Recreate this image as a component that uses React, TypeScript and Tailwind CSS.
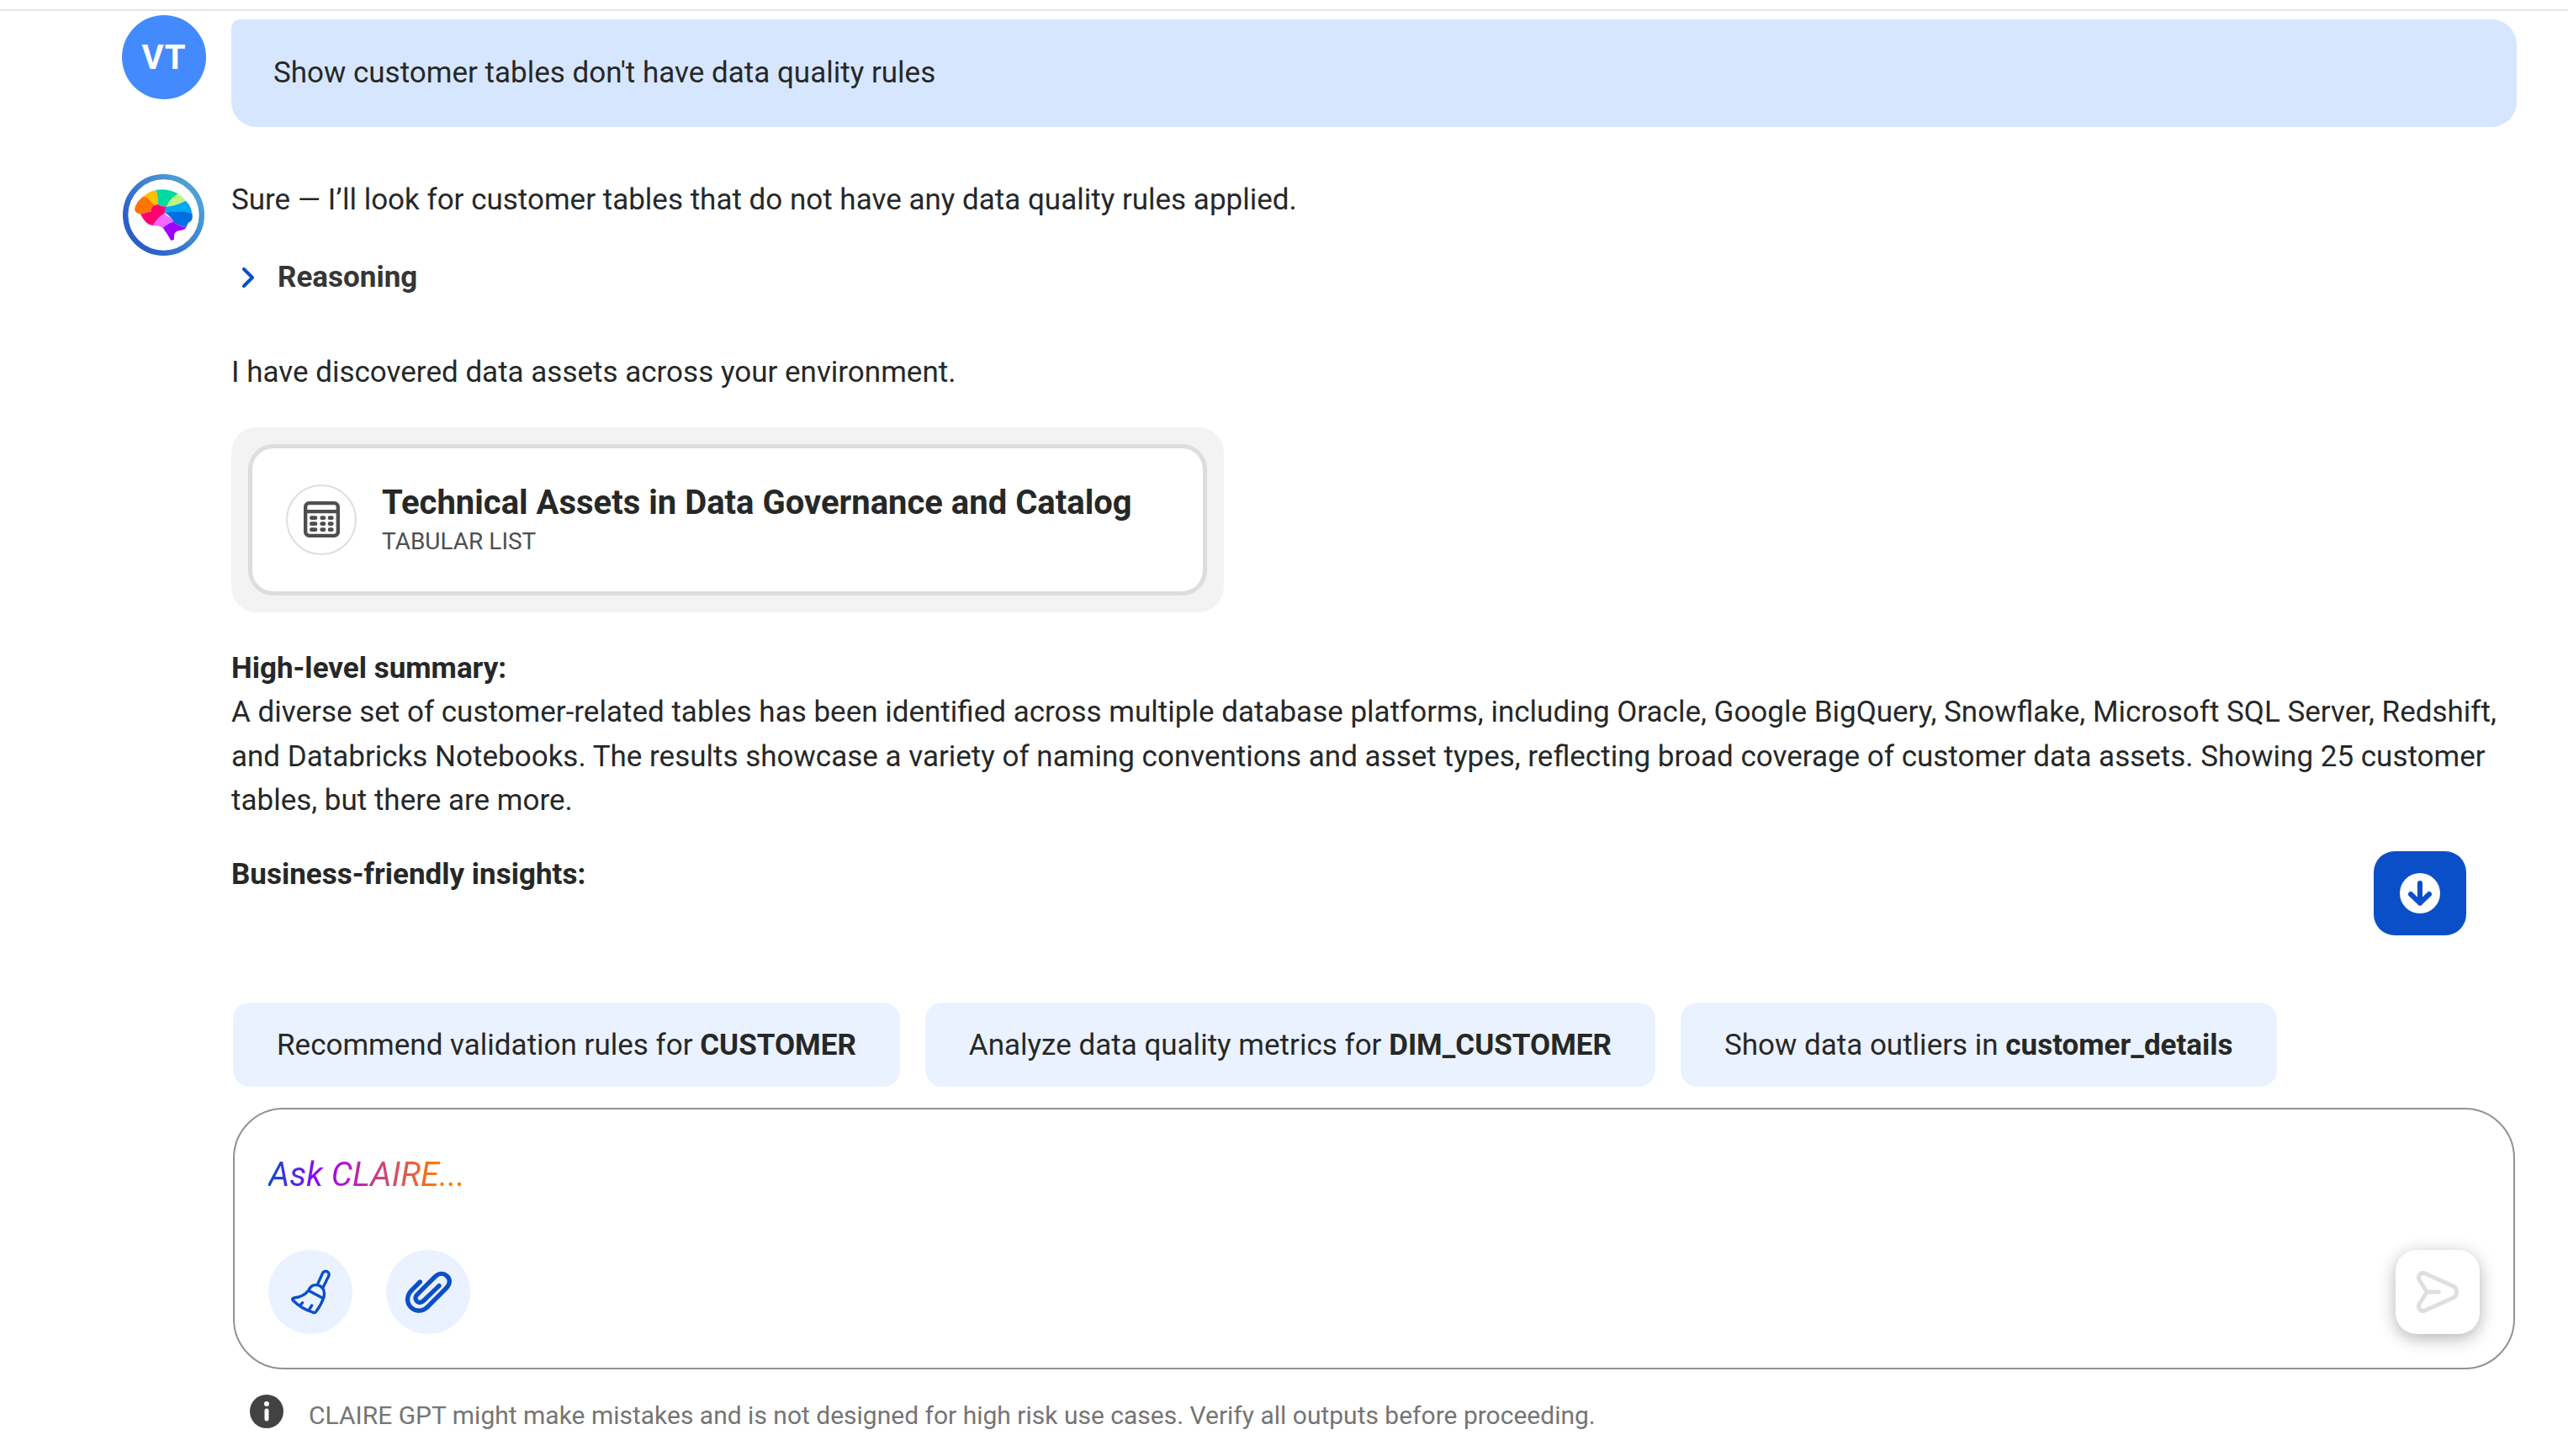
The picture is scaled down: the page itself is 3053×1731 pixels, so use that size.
import type { ReactNode } from "react";

function ClaireAvatar() {
  return (
    <svg viewBox="45 48 300 300" className="size-[100px] shrink-0" role="img" aria-label="CLAIRE">
      <defs>
        <linearGradient id="ring" x1="0.15" y1="0.75" x2="0.85" y2="0.2">
          <stop offset="0" stopColor="#2a5fc9" />
          <stop offset="1" stopColor="#4d9fd6" />
        </linearGradient>
      </defs>
      <circle cx="193.5" cy="196.5" r="136" fill="#fff" stroke="url(#ring)" strokeWidth="19" />
      <path fill="#ff7300" d="M124 129Q148 142 161 162Q150 168 149 184Q130 190 111 194Q92 190 90 178Q94 148 124 129Z" />
      <path fill="#ffbf00" d="M124 129Q142 113 166 108Q176 132 173 159L161 162Q145 142 124 129Z" />
      <path fill="#00d99f" d="M166 108Q205 100 245 121Q215 140 204 167Q185 168 173 159Q175 130 166 108Z" />
      <path fill="#c0f57c" d="M245 121Q262 130 272 146Q235 165 204 167Q215 140 245 121Z" />
      <path fill="#00a8f3" d="M272 146Q292 163 295 191Q250 178 196 190Q196 175 204 167Q235 165 272 146Z" />
      <path fill="#006ee0" d="M198 189Q250 178 295 191Q301 217 282 224Q278 230 275 239Q252 239 228 222Q222 203 198 189Z" />
      <path fill="#ff0070" d="M161 162L173 159Q185 168 204 167Q196 176 197 191Q170 208 156 234Q132 234 111 194Q130 190 149 184Q149 168 161 162Z" />
      <path fill="#f766ff" d="M197 191Q205 202 218 206Q227 212 228 221Q206 228 191 243Q176 232 156 234Q170 208 197 191Z" />
      <path fill="#a000ff" d="M191 243Q206 228 228 221Q250 239 275 239Q272 249 252 252Q230 255 231 272L231 284L220 288Q207 264 191 243Z" />
    </svg>
  );
}

function TabularIcon() {
  return (
    <svg viewBox="0 0 129 129" className="size-[43px]" aria-hidden="true">
      <rect x="6.5" y="6.5" width="116" height="116" rx="13" fill="none" stroke="#4d4f4f" strokeWidth="13" />
      <path d="M8 36.5H121" stroke="#4d4f4f" strokeWidth="13" />
      {[59, 80, 101].map((y) => (
        <g key={y} stroke="#4d4f4f" strokeWidth="14" strokeLinecap="round">
          <path d={`M28 ${y}H42`} />
          <path d={`M65 ${y}H72`} />
          <path d={`M93 ${y}H100`} />
        </g>
      ))}
    </svg>
  );
}

function ChevronIcon() {
  return (
    <svg viewBox="0 0 14 24" className="h-[24px] w-[14px]" fill="none" stroke="#0b4fc8" strokeWidth="4" strokeLinecap="round" strokeLinejoin="round" aria-hidden="true">
      <path d="M2 2L12 12L2 22" />
    </svg>
  );
}

function ArrowDownIcon() {
  return (
    <svg viewBox="0 0 144 144" className="size-[48px]" aria-hidden="true">
      <circle cx="72" cy="72" r="72" fill="#fff" />
      <path d="M72 36V107M39 75L72 107L105 75" fill="none" stroke="#0b4fc8" strokeWidth="18" strokeLinecap="round" strokeLinejoin="round" />
    </svg>
  );
}

function BroomIcon() {
  return (
    <svg viewBox="96 99 162 162" className="size-[54px]" fill="none" stroke="#0b4fc8" strokeWidth="10" strokeLinecap="round" strokeLinejoin="round" aria-hidden="true">
      <path d="M203 152L220 114C227 99 249 107 242 124L223 162" />
      <path d="M170 175C179 155 195 151 211 158C226 166 229 180 225 199C219 217 209 235 198 249C195 255 190 255 185 252C158 244 135 230 115 210C110 205 114 201 120 201C143 198 158 192 170 175L218 200" />
      <path d="M149 218L142 226M182 228L172 244" />
    </svg>
  );
}

function PaperclipIcon() {
  return (
    <svg viewBox="513 96 168 168" className="size-[56px]" fill="none" stroke="#0b4fc8" strokeWidth="16" strokeLinecap="round" strokeLinejoin="round" aria-hidden="true">
      <path d="M568 144L537 175C519 194 520 220 536 235C553 251 577 251 596 232L660 168C676 152 677 135 664 123C651 111 634 113 621 126L557 190C549 198 551 208 558 214C565 219 574 218 582 210L636 158" />
    </svg>
  );
}

function SendIcon() {
  return (
    <svg viewBox="0 0 150 150" className="size-[50px]" fill="none" stroke="#dfdfdf" strokeWidth="15" strokeLinecap="round" strokeLinejoin="round" aria-hidden="true">
      <path d="M37 75L10 33C2 18 15 2 30 9L130 54C147 62 147 88 130 96L30 141C15 148 2 132 10 117ZM37 75H79" />
    </svg>
  );
}

function InfoIcon() {
  return (
    <svg viewBox="0 0 40 40" className="size-[40px] shrink-0" aria-hidden="true">
      <circle cx="20" cy="20" r="20" fill="#424242" />
      <circle cx="20" cy="11" r="3" fill="#fff" />
      <path d="M20 19V29" stroke="#fff" strokeWidth="5" strokeLinecap="round" />
    </svg>
  );
}

function Suggestion({ children }: { children: ReactNode }) {
  return (
    <button type="button" className="h-[100px] rounded-[20px] bg-[#ebf2ff] px-[52px] pt-[2px] whitespace-nowrap">
      {children}
    </button>
  );
}

function RoundButton({ label, children }: { label: string; children: ReactNode }) {
  return (
    <button type="button" aria-label={label} className="flex size-[100px] items-center justify-center rounded-full bg-[#ebf2ff]">
      {children}
    </button>
  );
}

export default function App() {
  return (
    <div className="flex min-h-screen flex-col bg-white pt-[11px] font-['Roboto',sans-serif] text-[35px] leading-normal text-[#262828]">
      <main className="relative flex-1 border-t-2 border-[#e5e5e5] pt-[5px] pr-[61px] pl-[145px]">
        <section className="flex items-start gap-[30px]">
          <div className="flex size-[100px] shrink-0 items-center justify-center rounded-full bg-[#448aff] pt-[2px] text-[40px] font-bold tracking-wide text-white">
            VT
          </div>
          <p className="mt-[5px] flex h-[128px] flex-1 items-center rounded-[30px] rounded-tl-[10px] bg-[#d7e6ff] px-[50px]">
            Show customer tables don't have data quality rules
          </p>
        </section>

        <section className="mt-[55px] flex items-start gap-[30px]">
          <ClaireAvatar />
          <div className="flex-1 pt-[6px]">
            <p>Sure — I’ll look for customer tables that do not have any data quality rules applied.</p>
            <button type="button" aria-expanded="false" className="mt-[39px] flex items-center gap-[28px] pl-[13px] font-bold text-[#363636]">
              <ChevronIcon />
              Reasoning
            </button>
            <p className="mt-[61px]">I have discovered data assets across your environment.</p>

            <div className="mt-[38px] w-[1180px] max-w-full rounded-[30px] bg-[#f3f3f3] p-[20px]">
              <button type="button" className="flex w-full items-center gap-[30px] rounded-[30px] border-5 border-[#dbddde] bg-white px-[40px] py-[39px] text-left">
                <span className="flex size-[84px] shrink-0 items-center justify-center rounded-full border-2 border-[#dedede]">
                  <TabularIcon />
                </span>
                <span className="flex flex-col">
                  <span className="text-[40px] leading-[52px] font-bold">Technical Assets in Data Governance and Catalog</span>
                  <span className="text-[28px] leading-[40px] text-[#4d4f4f]">TABULAR LIST</span>
                </span>
              </button>
            </div>

            <h2 className="mt-[41px] font-bold">High-level summary:</h2>
            <p>
              A diverse set of customer-related tables has been identified across multiple database platforms, including Oracle, Google BigQuery, Snowflake, Microsoft SQL Server, Redshift, and Databricks Notebooks. The results showcase a variety of naming conventions and asset types, reflecting broad coverage of customer data assets. Showing 25 customer tables, but there are more.
            </p>
            <h2 className="mt-[35px] font-bold">Business-friendly insights:</h2>
          </div>
        </section>

        <button type="button" aria-label="Scroll to bottom" className="absolute right-[121px] bottom-[80px] flex h-[100px] w-[110px] items-center justify-center rounded-[25px] bg-[#0b4fc8]">
          <ArrowDownIcon />
        </button>
      </main>

      <footer className="pr-[63px] pb-[24px] pl-[277px]">
        <div className="flex gap-[30px]">
          <Suggestion>Recommend validation rules for <b>CUSTOMER</b></Suggestion>
          <Suggestion>Analyze data quality metrics for <b>DIM_CUSTOMER</b></Suggestion>
          <Suggestion>Show data outliers in <b>customer_details</b></Suggestion>
        </div>

        <form className="mt-[25px] rounded-[60px] border-2 border-[#929292] px-[40px] pt-[48px] pb-[40px]" onSubmit={(e) => e.preventDefault()}>
          <input
            type="text"
            aria-label="Ask CLAIRE"
            placeholder="Ask CLAIRE..."
            className="block h-[60px] w-full text-[40px] outline-none placeholder:bg-[linear-gradient(90deg,#0a4fc9_0px,#9b00ff_64px,#ff7f00_205px)] placeholder:bg-clip-text placeholder:text-transparent placeholder:italic"
          />
          <div className="mt-[59px] flex items-center gap-[40px]">
            <RoundButton label="Clear conversation"><BroomIcon /></RoundButton>
            <RoundButton label="Attach file"><PaperclipIcon /></RoundButton>
            <button type="submit" aria-label="Send" className="ml-auto flex size-[100px] items-center justify-center rounded-[25px] bg-white shadow-[0_5px_20px_rgba(0,0,0,0.3)]">
              <SendIcon />
            </button>
          </div>
        </form>

        <p className="mt-[30px] flex items-start gap-[30px] pl-[20px] text-[30px] leading-[49px] text-[#757575]">
          <InfoIcon />
          CLAIRE GPT might make mistakes and is not designed for high risk use cases. Verify all outputs before proceeding.
        </p>
      </footer>
    </div>
  );
}
